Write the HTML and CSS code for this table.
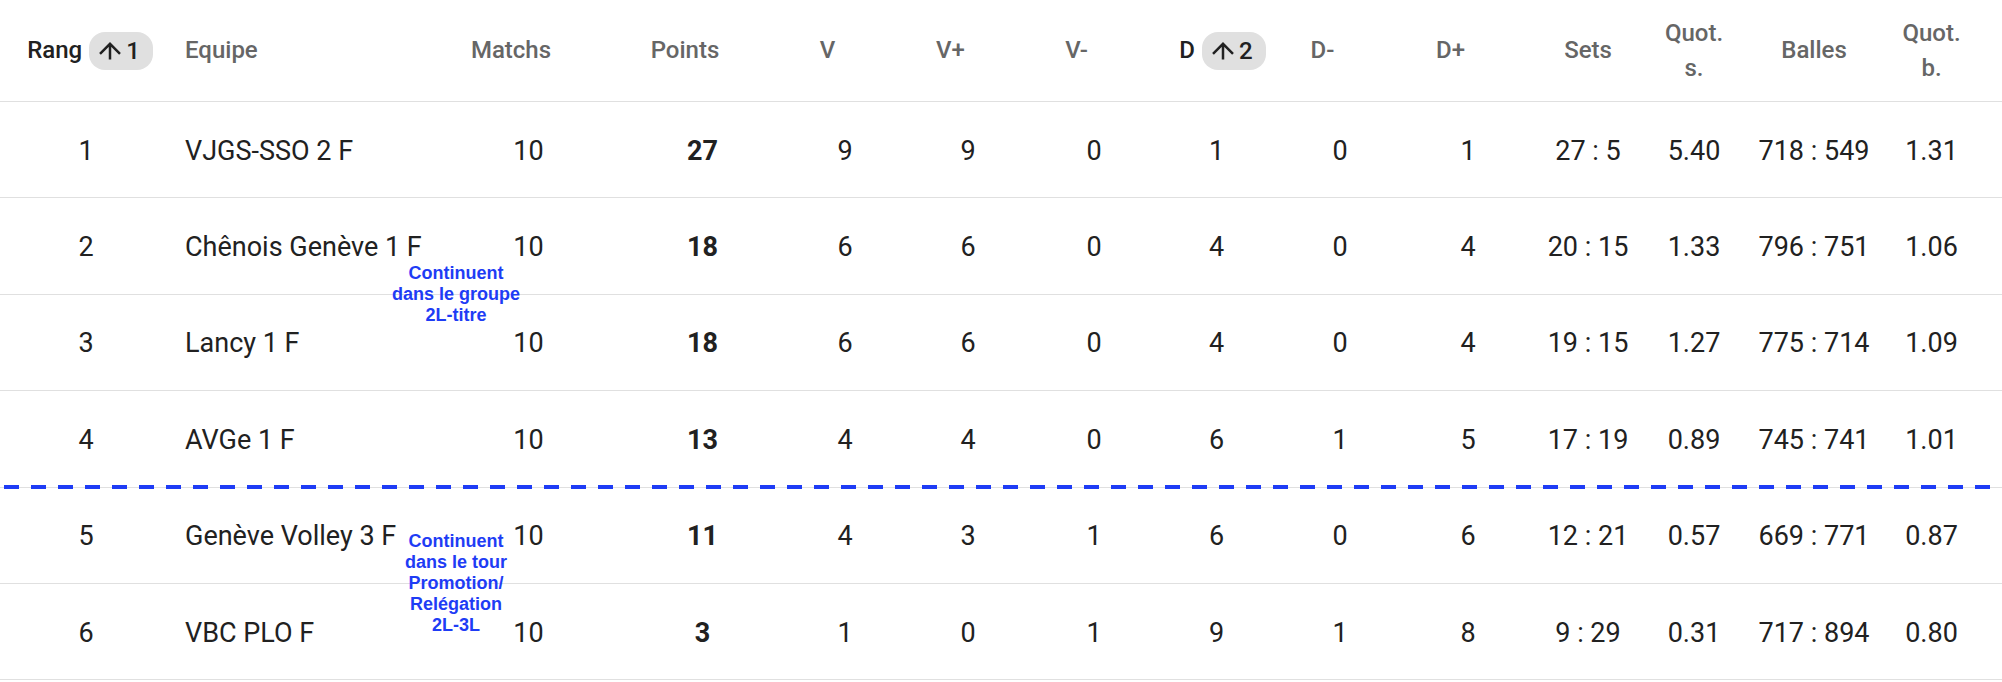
FILE: index.html
```html
<!DOCTYPE html>
<html lang="fr">
<head>
<meta charset="utf-8">
<title>Classement</title>
<link rel="stylesheet" href="styles.css">
</head>
<body>
<div class="standings">
  <div class="row head">
    <div class="cell sorted shift-rang"><span class="title">Rang</span><span class="badge"><svg class="arrow" viewBox="0 0 22 18" width="22" height="18"><path d="M11 17.6V1.8M1 11.8L11 1.8L21 11.8" fill="none" stroke="currentColor" stroke-width="2.5"/></svg><span>1</span></span></div>
    <div class="cell left"><span class="title">Equipe</span></div>
    <div class="cell"><span class="title">Matchs</span><span class="slot"></span></div>
    <div class="cell"><span class="title">Points</span><span class="slot"></span></div>
    <div class="cell"><span class="title">V</span><span class="slot"></span></div>
    <div class="cell"><span class="title">V+</span><span class="slot"></span></div>
    <div class="cell"><span class="title">V-</span><span class="slot"></span></div>
    <div class="cell sorted shift-d"><span class="title">D</span><span class="badge"><svg class="arrow" viewBox="0 0 22 18" width="22" height="18"><path d="M11 17.6V1.8M1 11.8L11 1.8L21 11.8" fill="none" stroke="currentColor" stroke-width="2.5"/></svg><span>2</span></span></div>
    <div class="cell"><span class="title">D-</span><span class="slot"></span></div>
    <div class="cell"><span class="title">D+</span><span class="slot"></span></div>
    <div class="cell"><span class="title">Sets</span></div>
    <div class="cell"><span class="title">Quot.<br>s.</span></div>
    <div class="cell"><span class="title">Balles</span></div>
    <div class="cell"><span class="title">Quot.<br>b.</span></div>
  </div>

  <div class="row line">
    <div class="cell">1</div><div class="cell left">VJGS-SSO 2 F</div><div class="cell">10</div><div class="cell pts">27</div>
    <div class="cell">9</div><div class="cell">9</div><div class="cell">0</div><div class="cell">1</div><div class="cell">0</div><div class="cell">1</div>
    <div class="cell">27 : 5</div><div class="cell">5.40</div><div class="cell">718 : 549</div><div class="cell">1.31</div>
  </div>

  <div class="row line">
    <div class="cell">2</div><div class="cell left">Chênois Genève 1 F</div><div class="cell">10</div><div class="cell pts">18</div>
    <div class="cell">6</div><div class="cell">6</div><div class="cell">0</div><div class="cell">4</div><div class="cell">0</div><div class="cell">4</div>
    <div class="cell">20 : 15</div><div class="cell">1.33</div><div class="cell">796 : 751</div><div class="cell">1.06</div>
    <div class="note">Continuent<br>dans le groupe<br>2L-titre</div>
  </div>

  <div class="row line">
    <div class="cell">3</div><div class="cell left">Lancy 1 F</div><div class="cell">10</div><div class="cell pts">18</div>
    <div class="cell">6</div><div class="cell">6</div><div class="cell">0</div><div class="cell">4</div><div class="cell">0</div><div class="cell">4</div>
    <div class="cell">19 : 15</div><div class="cell">1.27</div><div class="cell">775 : 714</div><div class="cell">1.09</div>
  </div>

  <div class="row line cut">
    <div class="cell">4</div><div class="cell left">AVGe 1 F</div><div class="cell">10</div><div class="cell pts">13</div>
    <div class="cell">4</div><div class="cell">4</div><div class="cell">0</div><div class="cell">6</div><div class="cell">1</div><div class="cell">5</div>
    <div class="cell">17 : 19</div><div class="cell">0.89</div><div class="cell">745 : 741</div><div class="cell">1.01</div>
  </div>

  <div class="row line">
    <div class="cell">5</div><div class="cell left">Genève Volley 3 F</div><div class="cell">10</div><div class="cell pts">11</div>
    <div class="cell">4</div><div class="cell">3</div><div class="cell">1</div><div class="cell">6</div><div class="cell">0</div><div class="cell">6</div>
    <div class="cell">12 : 21</div><div class="cell">0.57</div><div class="cell">669 : 771</div><div class="cell">0.87</div>
    <div class="note">Continuent<br>dans le tour<br>Promotion/<br>Relégation<br>2L-3L</div>
  </div>

  <div class="row line">
    <div class="cell">6</div><div class="cell left">VBC PLO F</div><div class="cell">10</div><div class="cell pts">3</div>
    <div class="cell">1</div><div class="cell">0</div><div class="cell">1</div><div class="cell">9</div><div class="cell">1</div><div class="cell">8</div>
    <div class="cell">9 : 29</div><div class="cell">0.31</div><div class="cell">717 : 894</div><div class="cell">0.80</div>
  </div>
</div>
</body>
</html>
```

FILE: styles.css
```css
html, body {
  margin: 0;
  padding: 0;
  background: #ffffff;
}

body {
  font-family: Roboto, "Noto Sans", "Liberation Sans", sans-serif;
  color: #212121;
}

.standings {
  width: 2002px;
}

.row {
  position: relative;
  display: grid;
  grid-template-columns: 172px 268px 177px 171px 114px 132px 120px 125px 122px 134px 106px 106px 134px 101px;
  padding-right: 20px;
  box-sizing: border-box;
  border-bottom: 1px solid #e0e0e0;
}

.head {
  height: 102px;
}

.line {
  height: 96.4px;
}

.cell {
  display: flex;
  align-items: center;
  justify-content: center;
  gap: 7px;
  white-space: nowrap;
  min-width: 0;
}

.cell.left {
  justify-content: flex-start;
  padding-left: 13px;
}

.head .cell {
  font-size: 24px;
  font-weight: 500;
  line-height: 35px;
  color: #666666;
  text-align: center;
}

.head .cell.sorted {
  color: #212121;
}

.shift-rang {
  padding-left: 8px;
}

.shift-d {
  padding-left: 12px;
}

.slot {
  display: inline-block;
  width: 28px;
  height: 28px;
  visibility: hidden;
}

.badge {
  display: inline-flex;
  align-items: center;
  gap: 5px;
  height: 38px;
  padding: 0 13px 0 10px;
  border-radius: 16px;
  background: #e0e0e0;
  color: #212121;
  line-height: 1;
}

.arrow {
  display: block;
  margin-top: 1px;
}

.line .cell {
  padding-top: 2px;
  font-size: 27px;
  font-weight: 400;
  color: #212121;
}

.line .cell.left {
  padding-top: 2px;
}

.line .cell.pts {
  font-weight: 700;
}

.cut::after {
  content: "";
  position: absolute;
  left: 4px;
  right: 12px;
  bottom: -2px;
  height: 4px;
  background: repeating-linear-gradient(90deg, #1e3cf5 0 15px, transparent 15px 27px);
  z-index: 2;
}

.note {
  position: absolute;
  left: 456px;
  bottom: 0;
  transform: translate(-50%, 50%);
  font-family: "Liberation Sans", Arial, sans-serif;
  font-weight: 700;
  font-size: 18px;
  line-height: 21px;
  color: #1e3cf5;
  text-align: center;
  white-space: nowrap;
  z-index: 3;
}
```
